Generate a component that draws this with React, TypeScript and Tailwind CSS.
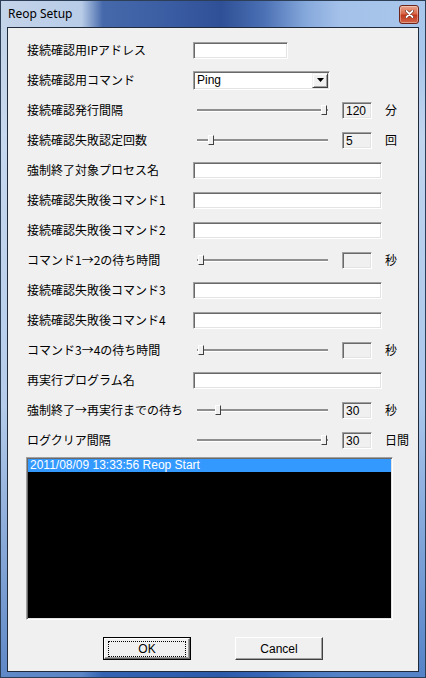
// Reop Setup dialog, drawn the way Vista shows a classic-control dialog:
// glass frame around a grey client area with labelled rows, sliders and a log list.
import type { ReactNode } from 'react'

// classic two-line sunken edge used by edits, the combo and the list
const sunken =
  'border border-t-[#a0a0a0] border-l-[#a0a0a0] border-r-white border-b-white shadow-[inset_1px_1px_0_#696969,inset_-1px_-1px_0_#e3e3e3]'

function Row({ label, children }: { label: string; children?: ReactNode }) {
  return (
    <div className="flex h-[30px] items-center">
      <div className="w-[166px] shrink-0 whitespace-nowrap font-['Noto_Sans_CJK_JP',sans-serif] leading-[14px]">
        {label}
      </div>
      {children}
    </div>
  )
}

function TextRow({ label, wide = true }: { label: string; wide?: boolean }) {
  return (
    <Row label={label}>
      <div className={`h-[17px] bg-white ${wide ? 'w-[189px]' : 'w-[95px]'} ${sunken}`} />
    </Row>
  )
}

/** Trackbar + read-only value box + unit. thumb = thumb's left edge in px. */
function SliderRow({ label, thumb, value, unit }: { label: string; thumb: number; value: string; unit: string }) {
  return (
    <Row label={label}>
      <div className="relative h-[17px] w-[149px] shrink-0">
        <div className="absolute left-[4px] top-[7px] h-[3px] w-[131px] border-t-2 border-b border-t-[#8e8e8e] border-b-white" />
        <div
          className="absolute top-[3px] h-[10px] w-[6px] border border-t-white border-l-white border-r-[#404040] border-b-[#404040] bg-[#f0f0f0]"
          style={{ left: thumb }}
        />
      </div>
      <div className={`h-[17px] w-[30px] shrink-0 bg-[#f0f0f0] pl-[3px] text-[12px] leading-[16px] ${sunken}`}>
        {value}
      </div>
      <div className="ml-[13px] whitespace-nowrap font-['Noto_Sans_CJK_JP',sans-serif] leading-[14px]">{unit}</div>
    </Row>
  )
}

export default function App() {
  return (
    <div className="h-[678px] w-[426px] border border-[#2d3e57] bg-[linear-gradient(90deg,#c4d4e9_0%,#b8cce8_19%,#4669ab_24%,#3a5ca2_40%,#2f5096_52%,#4b70b4_62%,#86a9dc_72%,#a4c1e9_80%,#a9c6ec_100%)] font-['Liberation_Sans','Noto_Sans_CJK_JP',sans-serif] text-[12px] text-black">
      <div className="flex h-full w-full flex-col bg-[linear-gradient(180deg,rgba(255,255,255,0)_0%,rgba(255,255,255,0)_8%,rgba(200,218,240,0.75)_20%,rgba(170,198,235,0.6)_60%,rgba(40,95,180,0.65)_100%)] px-[6px] pb-[5px]">
        {/* title bar */}
        <div className="flex h-[26px] shrink-0 items-center justify-between">
          <span className="pl-[1px] font-['Noto_Sans',sans-serif] text-[12px] text-black">Reop Setup</span>
          <div className="flex h-[19px] w-[20px] items-center justify-center rounded-[3px] border border-[#6e2418] bg-[linear-gradient(180deg,#e9a48c_0%,#d9684a_45%,#c2381d_55%,#d2664a_100%)] shadow-[inset_0_0_0_1px_rgba(255,255,255,0.35)]">
            <svg width="9" height="8" viewBox="0 0 9 8">
              <path d="M1.5 1 L7.5 7 M7.5 1 L1.5 7" stroke="#5a1a10" strokeWidth="3" strokeLinecap="round" />
              <path d="M1.5 1 L7.5 7 M7.5 1 L1.5 7" stroke="#ffffff" strokeWidth="1.8" strokeLinecap="round" />
            </svg>
          </div>
        </div>

        {/* client area */}
        <div className="flex flex-1 flex-col border border-[#1f2b3b] bg-[#f0f0f0]">
          <div className="pl-[19px] pt-[7px]">
            <TextRow label="接続確認用IPアドレス" wide={false} />
            <Row label="接続確認用コマンド">
              <div className={`flex h-[19px] w-[137px] items-center bg-white ${sunken}`}>
                <span className="flex-1 pl-[3px] text-[12px] leading-[15px]">Ping</span>
                <div className="mr-[1px] flex h-[15px] w-[16px] items-center justify-center border border-t-[#f0f0f0] border-l-[#f0f0f0] border-r-[#404040] border-b-[#404040] bg-[#f0f0f0] shadow-[inset_1px_1px_0_#ffffff,inset_-1px_-1px_0_#a0a0a0]">
                  <svg width="7" height="4" viewBox="0 0 7 4">
                    <path d="M0 0 H7 L3.5 4 Z" fill="#000000" />
                  </svg>
                </div>
              </div>
            </Row>
            <SliderRow label="接続確認発行間隔" thumb={128} value="120" unit="分" />
            <SliderRow label="接続確認失敗認定回数" thumb={15} value="5" unit="回" />
            <TextRow label="強制終了対象プロセス名" />
            <TextRow label="接続確認失敗後コマンド1" />
            <TextRow label="接続確認失敗後コマンド2" />
            <SliderRow label="コマンド1→2の待ち時間" thumb={5} value="" unit="秒" />
            <TextRow label="接続確認失敗後コマンド3" />
            <TextRow label="接続確認失敗後コマンド4" />
            <SliderRow label="コマンド3→4の待ち時間" thumb={5} value="" unit="秒" />
            <TextRow label="再実行プログラム名" />
            <SliderRow label="強制終了→再実行までの待ち" thumb={22} value="30" unit="秒" />
            <SliderRow label="ログクリア間隔" thumb={128} value="30" unit="日間" />
          </div>

          {/* log list */}
          <div className={`ml-[18px] mt-[2px] h-[163px] w-[367px] bg-black ${sunken}`}>
            <div className="mx-[1px] mt-[1px] h-[13px] bg-[#3399ff] pl-[2px] text-[12px] leading-[13px] whitespace-nowrap text-white">
              2011/08/09 13:33:56 Reop Start
            </div>
          </div>

          {/* buttons */}
          <div className="mt-[17px] flex justify-center gap-[44px]">
            <button type="button" className="h-[23px] w-[88px] border border-black bg-[#f0f0f0] p-0">
              <div className="flex h-full w-full items-center justify-center border border-t-white border-l-white border-r-[#696969] border-b-[#696969] shadow-[inset_-1px_-1px_0_#a0a0a0]">
                <span className="flex h-[16px] w-[78px] items-center justify-center border border-dotted border-black text-[12px]">
                  OK
                </span>
              </div>
            </button>
            <button
              type="button"
              className="flex h-[23px] w-[88px] items-center justify-center border border-t-white border-l-white border-r-[#404040] border-b-[#404040] bg-[#f0f0f0] text-[12px] shadow-[inset_-1px_-1px_0_#a0a0a0]"
            >
              Cancel
            </button>
          </div>
        </div>
      </div>
    </div>
  )
}
